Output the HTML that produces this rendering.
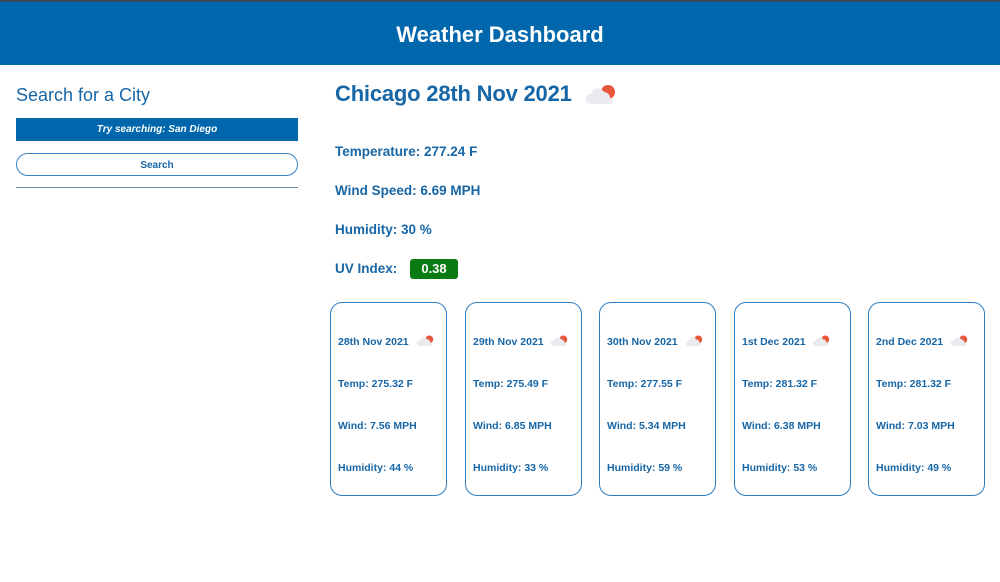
<!DOCTYPE html>
<html><head><meta charset="utf-8"><style>
*{margin:0;padding:0;box-sizing:border-box}
body{width:1000px;height:582px;overflow:hidden;background:#fff;font-family:"Liberation Sans",sans-serif;color:#1766a6;position:relative}
.hdr{position:absolute;left:0;top:0;width:1000px;height:65px;background:#0067ad;border-top:2px solid #3a4a5a;color:#fff;font-weight:bold;font-size:22px;text-align:center;line-height:66px}
.abs{position:absolute;white-space:nowrap}
.b{font-weight:bold}
.card{position:absolute;top:302px;width:117px;height:194px;border:1.3px solid #2d7cc0;border-radius:12px}
.card div{position:absolute;left:7px;font-size:10.5px;font-weight:bold;white-space:nowrap}
.cloud{position:absolute}
</style></head><body>
<div class="hdr">Weather Dashboard</div>
<div class="abs" style="left:16px;top:85px;font-size:18px">Search for a City</div>
<div class="abs" style="left:16px;top:118px;width:282px;height:23px;background:#0067ad;color:#fff;font-size:10px;font-style:italic;font-weight:bold;text-align:center;line-height:24px">Try searching: San Diego</div>
<div class="abs" style="left:16px;top:153px;width:282px;height:23px;border:1.3px solid #3a84c4;border-radius:12px;font-size:10px;font-weight:bold;text-align:center;line-height:23px">Search</div>
<div class="abs" style="left:16px;top:187px;width:282px;height:1px;background:#6a8bab"></div>
<div class="abs b" style="left:335px;top:81px;font-size:22px;letter-spacing:-0.2px">Chicago 28th Nov 2021</div>
<svg class="cloud" style="left:584px;top:83px" width="36" height="22" viewBox="0 0 36 22"><circle cx="24" cy="9" r="7" fill="#e8573a"/><path d="M6 21a5 5 0 0 1 1-10a7 7 0 0 1 13-2a6 6 0 0 1 6 6a3 3 0 0 1 0 6z" fill="#e9ebee"/></svg>
<div class="abs b" style="left:335px;top:144px;font-size:13.5px">Temperature: 277.24 F</div>
<div class="abs b" style="left:335px;top:183px;font-size:13.5px">Wind Speed: 6.69 MPH</div>
<div class="abs b" style="left:335px;top:222px;font-size:13.5px">Humidity: 30 %</div>
<div class="abs b" style="left:335px;top:261px;font-size:13.5px">UV Index:</div>
<div class="abs b" style="left:410px;top:259px;width:48px;height:20px;background:#0a7a12;border-radius:3px;color:#fff;font-size:13px;text-align:center;line-height:20px">0.38</div>

<div class="card" style="left:330px"><div style="top:33px">28th Nov 2021</div><div style="top:75px">Temp: 275.32 F</div><div style="top:117px">Wind: 7.56 MPH</div><div style="top:159px">Humidity: 44 %</div></div>
<div class="card" style="left:465px"><div style="top:33px">29th Nov 2021</div><div style="top:75px">Temp: 275.49 F</div><div style="top:117px">Wind: 6.85 MPH</div><div style="top:159px">Humidity: 33 %</div></div>
<div class="card" style="left:599px"><div style="top:33px">30th Nov 2021</div><div style="top:75px">Temp: 277.55 F</div><div style="top:117px">Wind: 5.34 MPH</div><div style="top:159px">Humidity: 59 %</div></div>
<div class="card" style="left:734px"><div style="top:33px">1st Dec 2021</div><div style="top:75px">Temp: 281.32 F</div><div style="top:117px">Wind: 6.38 MPH</div><div style="top:159px">Humidity: 53 %</div></div>
<div class="card" style="left:868px"><div style="top:33px">2nd Dec 2021</div><div style="top:75px">Temp: 281.32 F</div><div style="top:117px">Wind: 7.03 MPH</div><div style="top:159px">Humidity: 49 %</div></div>

<svg class="cloud" style="left:416px;top:334px" width="20" height="13" viewBox="0 0 36 22"><circle cx="24" cy="9" r="7" fill="#e8573a"/><path d="M6 21a5 5 0 0 1 1-10a7 7 0 0 1 13-2a6 6 0 0 1 6 6a3 3 0 0 1 0 6z" fill="#e9ebee"/></svg>
<svg class="cloud" style="left:550px;top:334px" width="20" height="13" viewBox="0 0 36 22"><circle cx="24" cy="9" r="7" fill="#e8573a"/><path d="M6 21a5 5 0 0 1 1-10a7 7 0 0 1 13-2a6 6 0 0 1 6 6a3 3 0 0 1 0 6z" fill="#e9ebee"/></svg>
<svg class="cloud" style="left:685px;top:334px" width="20" height="13" viewBox="0 0 36 22"><circle cx="24" cy="9" r="7" fill="#e8573a"/><path d="M6 21a5 5 0 0 1 1-10a7 7 0 0 1 13-2a6 6 0 0 1 6 6a3 3 0 0 1 0 6z" fill="#e9ebee"/></svg>
<svg class="cloud" style="left:812px;top:334px" width="20" height="13" viewBox="0 0 36 22"><circle cx="24" cy="9" r="7" fill="#e8573a"/><path d="M6 21a5 5 0 0 1 1-10a7 7 0 0 1 13-2a6 6 0 0 1 6 6a3 3 0 0 1 0 6z" fill="#e9ebee"/></svg>
<svg class="cloud" style="left:950px;top:334px" width="20" height="13" viewBox="0 0 36 22"><circle cx="24" cy="9" r="7" fill="#e8573a"/><path d="M6 21a5 5 0 0 1 1-10a7 7 0 0 1 13-2a6 6 0 0 1 6 6a3 3 0 0 1 0 6z" fill="#e9ebee"/></svg>
</body></html>
